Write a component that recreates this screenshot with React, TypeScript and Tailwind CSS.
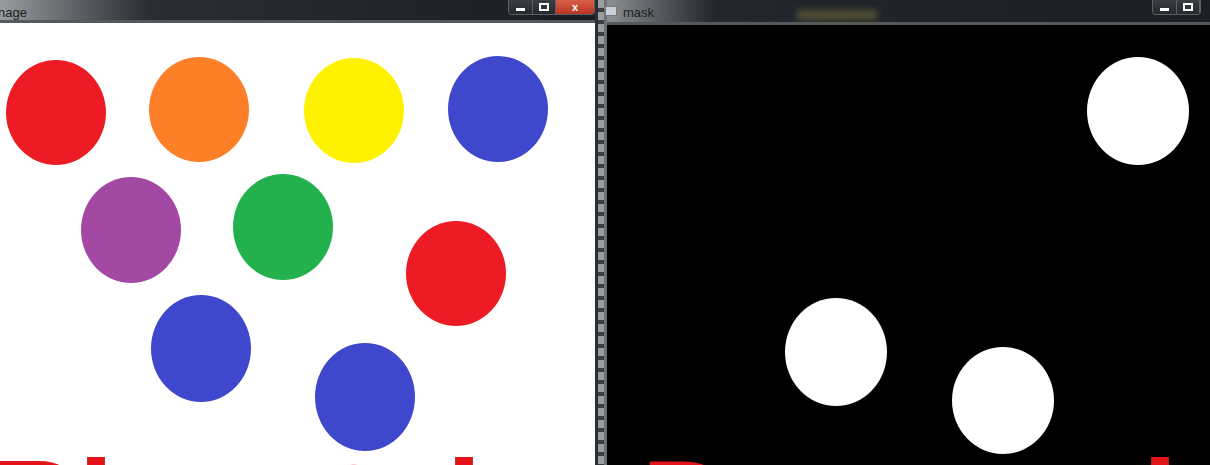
import React from "react";

type Dot = { l: number; t: number; w: number; h: number; c: string };

const leftDots: Dot[] = [
  { l: 6, t: 37, w: 100, h: 105, c: "#ed1c24" },
  { l: 149, t: 34, w: 100, h: 105, c: "#fd7f28" },
  { l: 304, t: 35, w: 100, h: 105, c: "#fff200" },
  { l: 448, t: 33, w: 100, h: 106, c: "#3f48cc" },
  { l: 81, t: 154, w: 100, h: 106, c: "#a349a4" },
  { l: 233, t: 151, w: 100, h: 106, c: "#22b14c" },
  { l: 406, t: 198, w: 100, h: 105, c: "#ed1c24" },
  { l: 151, t: 272, w: 100, h: 107, c: "#3f48cc" },
  { l: 315, t: 320, w: 100, h: 108, c: "#3f48cc" },
];

const rightDots: Dot[] = [
  { l: 480, t: 32, w: 102, h: 108, c: "#ffffff" },
  { l: 178, t: 273, w: 102, h: 108, c: "#ffffff" },
  { l: 345, t: 322, w: 102, h: 107, c: "#ffffff" },
];

function Glyph({ ch, l, t }: { ch: string; l: number; t: number }) {
  return (
    <span
      className="absolute text-[130px] leading-none font-bold text-[#e3141b]"
      style={{ left: l, top: t, fontFamily: '"Liberation Sans", Arial, sans-serif' }}
    >
      {ch}
    </span>
  );
}

function Buttons({ close }: { close: boolean }) {
  return (
    <div className="flex h-[15px] border border-t-0 border-[#5c6066] rounded-b-[4px] overflow-hidden">
      <div className="w-[24px] flex items-center justify-center bg-gradient-to-b from-[#3a3e44] to-[#25282d] border-r border-[#5c6066]">
        <div className="w-[9px] h-[3px] bg-white mt-[4px]" />
      </div>
      <div className="w-[23px] flex items-center justify-center bg-gradient-to-b from-[#3a3e44] to-[#25282d] border-r border-[#5c6066]">
        <div className="w-[10px] h-[8px] border-2 border-white" />
      </div>
      {close && (
        <div
          className="w-[38px] flex items-center justify-center bg-gradient-to-b from-[#d9604a] to-[#b93320] text-white text-[11px] font-bold leading-none"
          style={{ fontFamily: '"Liberation Sans", Arial, sans-serif' }}
        >
          x
        </div>
      )}
    </div>
  );
}

export default function App() {
  return (
    <div
      className="w-[1210px] h-[465px] flex overflow-hidden bg-[#1c2026]"
      style={{ fontFamily: '"Liberation Sans", Arial, sans-serif' }}
    >
      {/* left window */}
      <div className="w-[595px] flex flex-col shrink-0">
        <div className="h-[23px] flex items-start bg-gradient-to-r from-[#9a9c9e] via-[#2a2e34] via-[25%] to-[#1a1e24] border-b-[3px] border-[#55585c]">
          <span className="text-[13px] text-[#1e1e1e] mt-[3px] -ml-[2px]">nage</span>
          <div className="flex-1" />
          <Buttons close />
        </div>
        <div className="relative flex-1 bg-white overflow-hidden">
          {leftDots.map((d, i) => (
            <div
              key={i}
              className="absolute rounded-[50%]"
              style={{ left: d.l, top: d.t, width: d.w, height: d.h, background: d.c }}
            />
          ))}
          <Glyph ch="B" l={-12} t={418} />
          <Glyph ch="l" l={78} t={418} />
          <Glyph ch="o" l={314} t={402} />
          <Glyph ch="l" l={446} t={418} />
        </div>
      </div>
      {/* separator frame */}
      <div className="w-[12px] flex shrink-0">
        <div className="w-[3px] bg-[#2a2d31]" />
        <div className="w-[6px] bg-[repeating-linear-gradient(180deg,#9a9da1_0px,#9a9da1_8px,#3a3d41_8px,#3a3d41_12px)]" />
        <div className="w-[3px] bg-[#6e7175]" />
      </div>
      {/* right window */}
      <div className="flex-1 flex flex-col">
        <div className="h-[25px] flex items-start bg-gradient-to-r from-[#8d9093] via-[#23272d] via-[18%] to-[#1b1f25] border-b-[3px] border-[#55585c] relative">
          <div className="w-[12px] h-[10px] mt-[6px] -ml-[2px] bg-[#c9d0d4] border border-[#6f7a80]" />
          <span className="text-[13px] text-[#1e1e1e] mt-[3px] ml-[6px]">mask</span>
          <div className="absolute left-[190px] top-[10px] w-[80px] h-[10px] bg-[#6f6a3c] opacity-60 blur-[3px]" />
          <div className="flex-1" />
          <div className="mr-[9px]">
            <Buttons close={false} />
          </div>
        </div>
        <div className="relative flex-1 bg-black overflow-hidden">
          {rightDots.map((d, i) => (
            <div
              key={i}
              className="absolute rounded-[50%]"
              style={{ left: d.l, top: d.t, width: d.w, height: d.h, background: d.c }}
            />
          ))}
          <Glyph ch="D" l={34} t={416} />
          <Glyph ch="l" l={535} t={416} />
        </div>
      </div>
    </div>
  );
}
